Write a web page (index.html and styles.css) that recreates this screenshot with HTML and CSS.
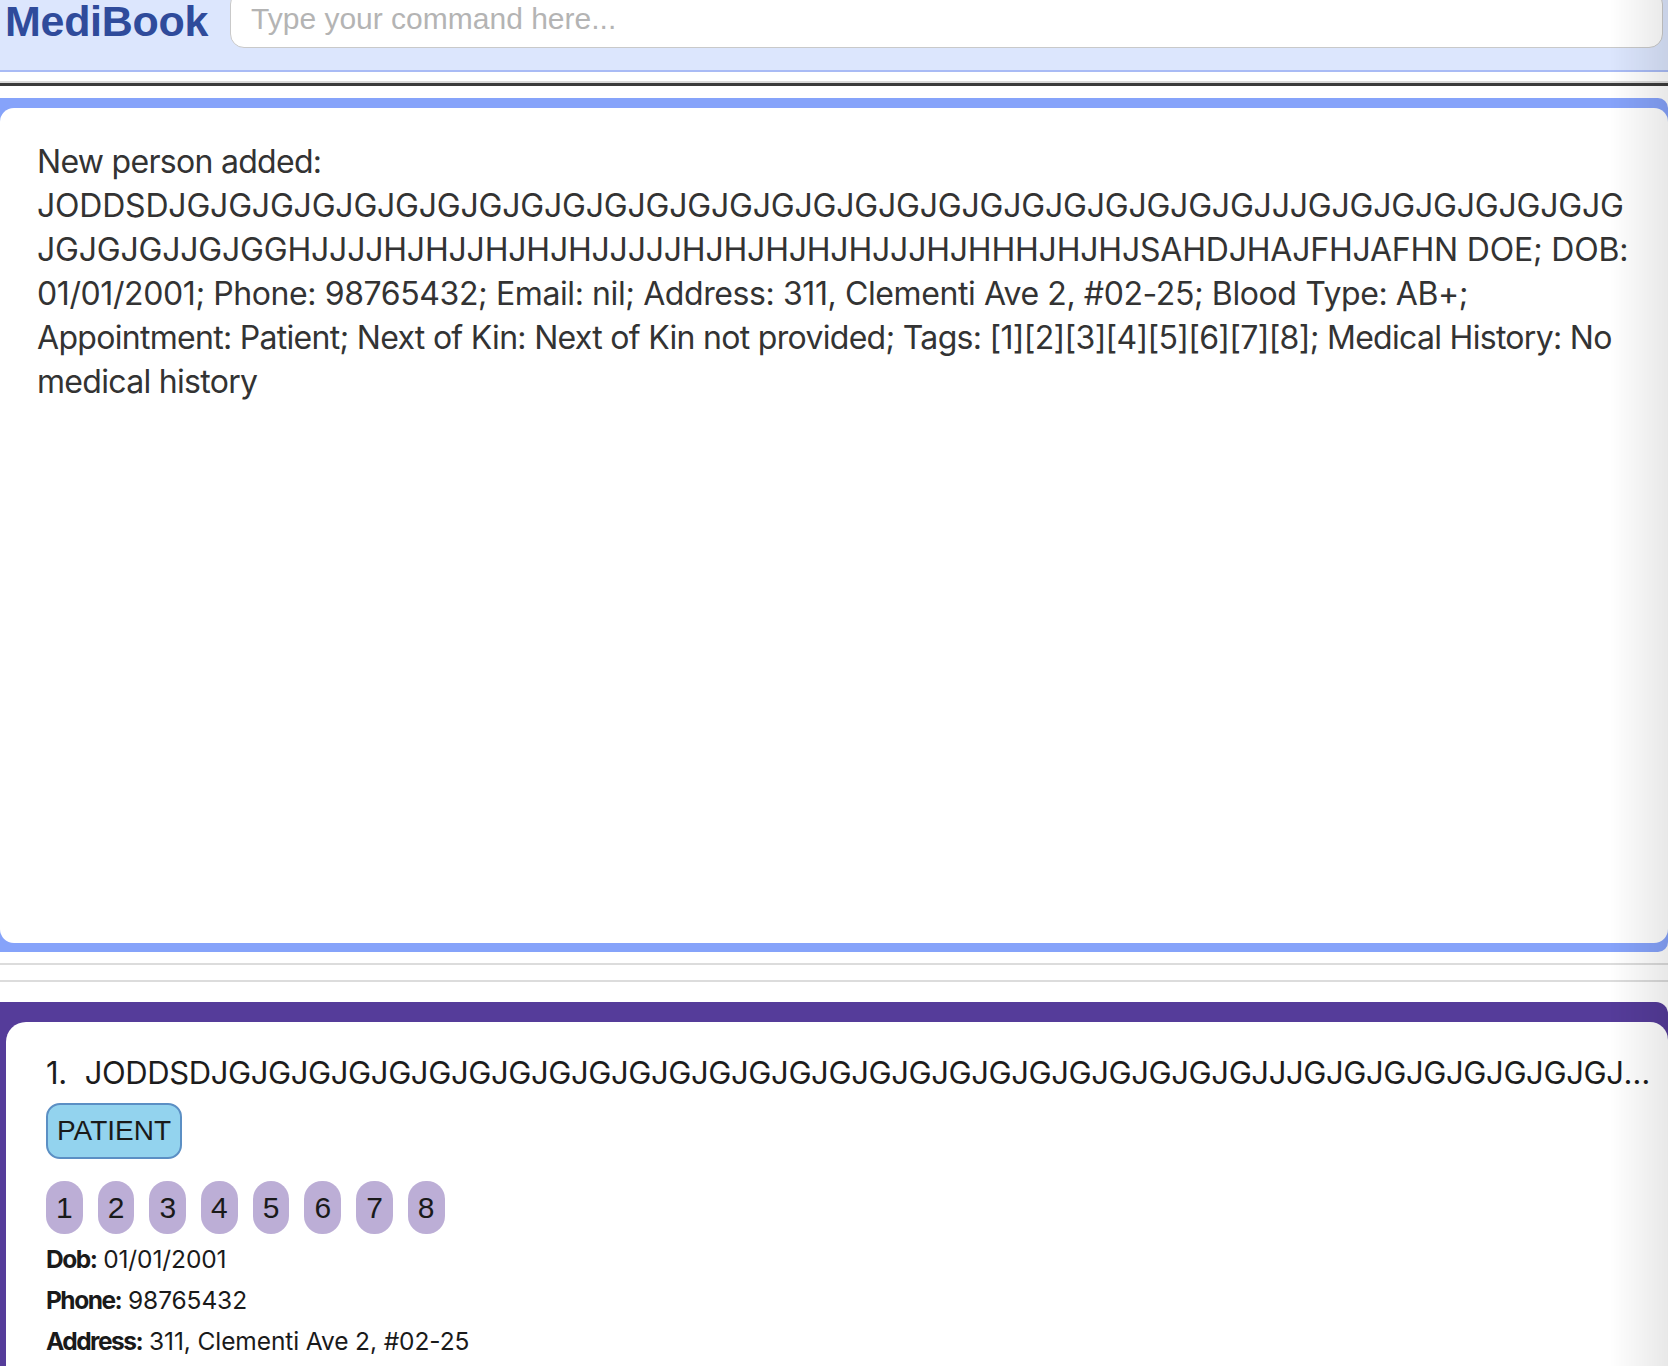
FILE: index.html
```html
<!DOCTYPE html>
<html lang="en">
<head>
<meta charset="utf-8">
<title>MediBook</title>
<link rel="stylesheet" href="styles.css">
</head>
<body>
<div class="app">
  <header class="topbar">
    <div class="logo">MediBook</div>
    <input class="command" type="text" placeholder="Type your command here...">
  </header>
  <div class="rule-double"></div>
  <section class="result-frame">
    <div class="result-box">
      <p class="result-text">New person added:<br><span class="caps">JODDSDJGJGJGJGJGJGJGJGJGJGJGJGJGJGJGJGJGJGJGJGJGJGJGJGJGJGJJJGJGJGJGJGJGJGJG<br>JGJGJGJJGJGGHJJJJHJHJJHJHJHJJJJJHJHJHJHJHJJJHJHHHJHJHJSAHDJHAJFHJAFHN DOE; DOB:</span> <span class="nums">01/01/2001; Phone: 98765432; Email: nil; Address: 311, Clementi Ave 2, #02-25; Blood Type: AB+;</span> Appointment: Patient; Next of Kin: Next of Kin not provided; Tags: [1][2][3][4][5][6][7][8]; Medical History: No medical history</p>
    </div>
  </section>
  <div class="rule-pair"></div>
  <section class="list-frame">
    <article class="person-card">
      <div class="person-name"><span class="idx">1.</span>JODDSDJGJGJGJGJGJGJGJGJGJGJGJGJGJGJGJGJGJGJGJGJGJGJGJGJGJGJJJGJGJGJGJGJGJGJGJGJGJGJJGJGGHJJJJHJHJJHJHJHJJJJJHJHJHJHJHJJJHJHHHJHJHJSAHDJHAJFHJAFHN DOE</div>
      <div class="role-row"><span class="role">PATIENT</span></div>
      <div class="tags">
        <span class="tag">1</span><span class="tag">2</span><span class="tag">3</span><span class="tag">4</span><span class="tag">5</span><span class="tag">6</span><span class="tag">7</span><span class="tag">8</span>
      </div>
      <div class="details">
        <div class="detail"><b>Dob:</b> 01/01/2001</div>
        <div class="detail"><b>Phone:</b> 98765432</div>
        <div class="detail"><b>Address:</b> 311, Clementi Ave 2, #02-25</div>
      </div>
    </article>
  </section>
</div>
<div class="edge-shade"></div>
</body>
</html>
```
FILE: styles.css
```css
html, body {
  margin: 0;
  padding: 0;
  background: #ffffff;
}
body {
  width: 1668px;
  height: 1366px;
  overflow: hidden;
  font-family: Inter, "Noto Sans", sans-serif;
}
.app {
  width: 1668px;
}
.topbar {
  height: 70px;
  background: #dce6fd;
  border-bottom: 2px solid #a9bbf5;
  display: flex;
  align-items: flex-start;
  gap: 22px;
  padding-left: 5px;
  padding-right: 5px;
}
.logo {
  font-family: "Liberation Sans", Arial, sans-serif;
  font-weight: bold;
  font-size: 43px;
  line-height: 42px;
  color: #2f4b9b;
  letter-spacing: -0.3px;
  white-space: nowrap;
}
.command {
  flex: 1;
  margin: -10px 0 0 0;
  height: 58px;
  box-sizing: border-box;
  border: 1.5px solid #c9c9c9;
  border-radius: 14px;
  background: #ffffff;
  padding: 0 0 0 20px;
  font-family: "Liberation Sans", Arial, sans-serif;
  font-size: 30px;
  color: #333333;
  outline: none;
}
.command::placeholder {
  color: #b4b4b4;
}
.rule-double {
  margin-top: 9px;
  border-top: 2px solid #dadada;
  border-bottom: 3px solid #3b3b3b;
}
.result-frame {
  margin-top: 12px;
  background: #86a3fa;
  padding: 10px 0 9px 0;
  border-radius: 0 10px 10px 0;
}
.result-box {
  background: #ffffff;
  border-radius: 14px;
  height: 835px;
  box-sizing: border-box;
  padding: 32px 28px 0 37px;
}
.result-text {
  margin: 0;
  font-size: 32px;
  line-height: 44px;
  letter-spacing: -0.7px;
  color: #333333;
  overflow-wrap: anywhere;
}
.caps {
  letter-spacing: -0.2px;
}
.nums {
  letter-spacing: -0.4px;
}
.rule-pair {
  margin-top: 11px;
  height: 15px;
  border-top: 2px solid #dcdcdc;
  border-bottom: 2px solid #dcdcdc;
}
.list-frame {
  margin-top: 20px;
  background: #553c9a;
  padding: 20px 0 0 6px;
  border-radius: 0 12px 0 0;
  height: 400px;
}
.person-card {
  background: #ffffff;
  border-radius: 20px 18px 0 0;
  padding: 31px 13px 0 40px;
  height: 100%;
  box-sizing: border-box;
}
.person-name {
  font-size: 31px;
  line-height: 40px;
  letter-spacing: -0.4px;
  color: #1c1c1c;
  white-space: nowrap;
  overflow: hidden;
  text-overflow: ellipsis;
}
.idx {
  margin-right: 18px;
}
.role-row {
  margin-top: 10px;
  display: flex;
}
.role {
  height: 56px;
  box-sizing: border-box;
  line-height: 52px;
  padding: 0 9px;
  border: 2px solid #5b8fc4;
  border-radius: 14px;
  background: #93d3ee;
  font-family: "Liberation Sans", Arial, sans-serif;
  font-size: 28px;
  color: #1a1a1a;
}
.tags {
  margin-top: 22px;
  display: flex;
  gap: 15px;
}
.tag {
  height: 53px;
  line-height: 53px;
  padding: 0 10px;
  border-radius: 18px;
  background: #bcaed6;
  font-family: "Liberation Sans", Arial, sans-serif;
  font-size: 30px;
  color: #1a1a1a;
}
.details {
  margin-top: 5px;
}
.detail {
  font-size: 24.5px;
  line-height: 41px;
  color: #1a1a1a;
  letter-spacing: -0.1px;
}
.detail b {
  font-weight: 700;
  letter-spacing: -1.5px;
}
.edge-shade {
  position: fixed;
  top: 0;
  right: 0;
  width: 58px;
  height: 100%;
  background: linear-gradient(to right, rgba(0, 0, 0, 0), rgba(0, 0, 0, 0.09));
  pointer-events: none;
}
```
